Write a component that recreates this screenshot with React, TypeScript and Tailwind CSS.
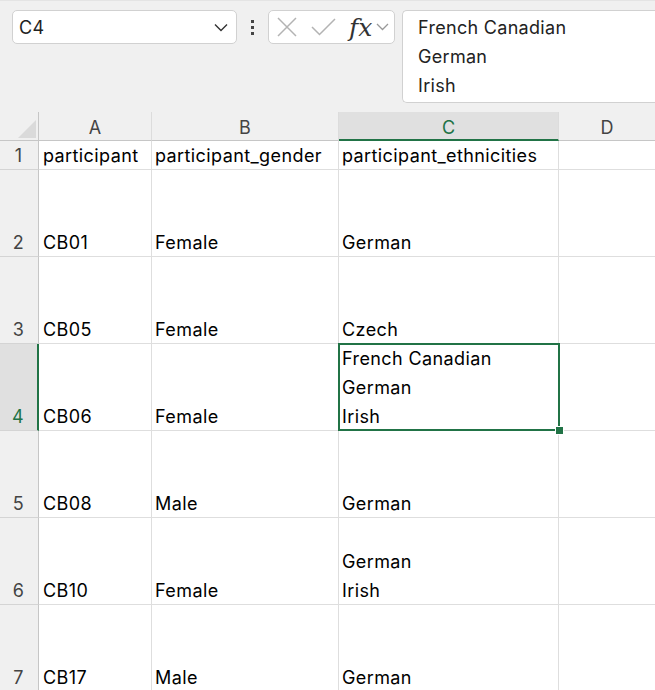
import React from "react";

const rows: { n: number; a: string; b: string; c: string[]; h: string }[] = [
  { n: 1, a: "participant", b: "participant_gender", c: ["participant_ethnicities"], h: "h-[29px]" },
  { n: 2, a: "CB01", b: "Female", c: ["German"], h: "h-[87px]" },
  { n: 3, a: "CB05", b: "Female", c: ["Czech"], h: "h-[87px]" },
  { n: 4, a: "CB06", b: "Female", c: ["French Canadian", "German", "Irish"], h: "h-[87px]" },
  { n: 5, a: "CB08", b: "Male", c: ["German"], h: "h-[87px]" },
  { n: 6, a: "CB10", b: "Female", c: ["German", "Irish"], h: "h-[87px]" },
  { n: 7, a: "CB17", b: "Male", c: ["German"], h: "h-[87px]" },
];

const font = { fontFamily: "Inter, 'Noto Sans', sans-serif" };

export default function App() {
  return (
    <div className="w-[655px] h-[690px] overflow-hidden bg-[#f0f0f0] text-[#000]" style={font}>
      {/* formula bar area */}
      <div className="h-[112px] flex items-start pt-[9px] pl-[12px] gap-0 border-t border-[#e4e4e4]">
        <div className="w-[225px] h-[34px] bg-white border border-[#d1d1d1] rounded-[5px] flex items-center justify-between pl-[6px] pr-[8px]">
          <span className="text-[18px] tracking-[0.3px] text-[#222]">C4</span>
          <svg width="14" height="9" viewBox="0 0 14 9" fill="none">
            <path d="M1 1.5 L7 7.5 L13 1.5" stroke="#333" strokeWidth="1.4" />
          </svg>
        </div>
        <div className="w-[31px] h-[34px] flex flex-col items-center justify-center gap-[3px]">
          <div className="w-[3px] h-[3px] bg-[#444]" />
          <div className="w-[3px] h-[3px] bg-[#444]" />
          <div className="w-[3px] h-[3px] bg-[#444]" />
        </div>
        <div className="w-[127px] h-[34px] bg-white border border-[#d1d1d1] rounded-[5px] flex items-center pl-[8px]">
          <svg width="20" height="20" viewBox="0 0 20 20" fill="none">
            <path d="M1 1 L19 19 M19 1 L1 19" stroke="#b3b3b3" strokeWidth="1.5" />
          </svg>
          <svg className="ml-[14px]" width="25" height="18" viewBox="0 0 25 18" fill="none">
            <path d="M1 9 L8.5 16.5 L24 1" stroke="#b3b3b3" strokeWidth="1.5" />
          </svg>
          <span
            className="ml-[13px] text-[25px] italic leading-none text-[#333]"
            style={{ fontFamily: "'DejaVu Serif', 'Liberation Serif', serif" }}
          >
            fx
          </span>
          <svg className="ml-[4px]" width="13" height="8" viewBox="0 0 13 8" fill="none">
            <path d="M1 1 L6.5 6.5 L12 1" stroke="#999" strokeWidth="1.3" />
          </svg>
        </div>
        <div className="ml-[7px] flex-1 h-[93px] bg-white border border-[#d1d1d1] border-r-0 rounded-l-[5px] pl-[15px] pt-[2px] text-[18px] tracking-[0.3px] leading-[29px] text-[#222]">
          <div>French Canadian</div>
          <div>German</div>
          <div>Irish</div>
        </div>
      </div>

      {/* column headers */}
      <div className="flex h-[29px] text-[18px] text-[#444]">
        <div className="w-[39px] shrink-0 border-r border-b border-[#c6c6c6] relative">
          <svg className="absolute right-[2px] bottom-[2px]" width="18" height="18" viewBox="0 0 18 18">
            <path d="M18 0 L18 18 L0 18 Z" fill="#dadada" />
          </svg>
        </div>
        <div className="w-[113px] shrink-0 border-r border-b border-r-[#dcdcdc] border-b-[#c6c6c6] flex items-center justify-center pt-[3px]">A</div>
        <div className="w-[187px] shrink-0 border-r border-b border-r-[#dcdcdc] border-b-[#c6c6c6] flex items-center justify-center pt-[3px]">B</div>
        <div className="w-[220px] shrink-0 bg-[#e0e0e0] border-b-2 border-[#217346] text-[#217346] flex items-center justify-center border-r border-r-[#dcdcdc] pt-[3px]">C</div>
        <div className="flex-1 border-b border-[#c6c6c6] flex items-center justify-center pt-[3px]">D</div>
      </div>

      {/* rows */}
      {rows.map((r) => {
        const sel = r.n === 4;
        return (
          <div key={r.n} className={`flex ${r.h} text-[18px] tracking-[0.4px] leading-[29px]`}>
            <div
              className={
                sel
                  ? "w-[39px] shrink-0 bg-[#e0e0e0] border-r-2 border-r-[#217346] border-b border-b-[#d4d4d4] flex items-end justify-center text-[#217346]"
                  : "w-[39px] shrink-0 border-r border-r-[#c6c6c6] border-b border-b-[#d4d4d4] flex items-end justify-center text-[#444]"
              }
            >
              <span className="pr-[1px] translate-y-[1px]">{r.n}</span>
            </div>
            <div className="w-[113px] shrink-0 bg-white border-r border-b border-[#dedede] flex items-end pl-[4px]">
              <span className="translate-y-[1px]">{r.a}</span>
            </div>
            <div className="w-[187px] shrink-0 bg-white border-r border-b border-[#dedede] flex items-end pl-[3px]">
              <span className="translate-y-[1px]">{r.b}</span>
            </div>
            <div className="w-[220px] shrink-0 bg-white border-r border-b border-[#dedede] flex flex-col justify-end pl-[3px] relative">
              {r.c.map((t) => (
                <div key={t} className="translate-y-[1px]">{t}</div>
              ))}
              {sel && (
                <div className="absolute left-[-1px] top-[-1px] w-[222px] h-[88px] border-2 border-[#217346] pointer-events-none z-10">
                  <div className="absolute right-[-6px] bottom-[-6px] w-[9px] h-[9px] bg-[#217346] border border-white" />
                </div>
              )}
            </div>
            <div className="flex-1 bg-white border-b border-[#dedede]" />
          </div>
        );
      })}
    </div>
  );
}
